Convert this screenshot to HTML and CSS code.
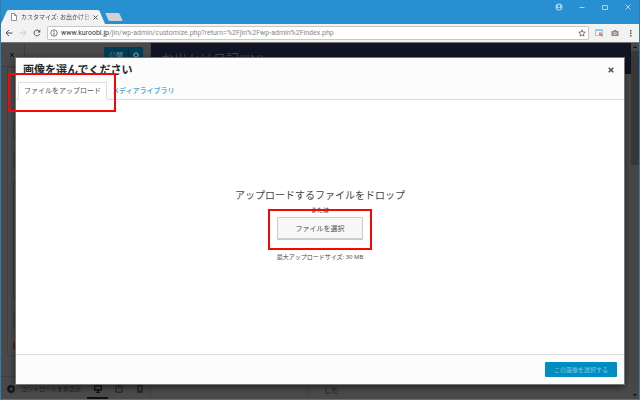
FILE: index.html
```html
<!DOCTYPE html>
<html lang="ja">
<head>
    <meta charset="UTF-8">
    <meta name="viewport" content="width=device-width, initial-scale=1.0">
    <title>カスタマイズ: お出かけ日記</title>
    <link rel="stylesheet" href="styles.css">
</head>
<body>
    <!-- Title bar -->
    <header class="titlebar">
        <div class="tab">
            <svg class="tab-shape" viewBox="0 0 106 14" preserveAspectRatio="none"><path d="M0 14 L6 1 Q6.500 0 8 0 H97 Q99 0 99.500 1 L105 14 Z" fill="#f2f2f2"/></svg>
            <svg class="file-icon" viewBox="0 0 6 8"><path d="M.5.5h3l2 2v5h-5zM3.500.5v2h2" fill="#fff" stroke="#777" stroke-width=".8"/></svg>
            <span class="tab-title">カスタマイズ: お出かけ日記(</span>
            <button class="tab-close" aria-label="閉じる"><svg viewBox="0 0 5 5"><path d="M.5.5l4 4M4.500.5l-4 4" stroke="#555"/></svg></button>
        </div>
        <button class="new-tab" aria-label="新しいタブ"></button>
        <div class="window-controls">
            <button aria-label="ユーザー"><svg viewBox="0 0 8 8"><circle cx="4" cy="4" r="3.500" fill="#a9d3ee"/><circle cx="4" cy="3" r="1.200" fill="#2890d0"/><path d="M1.800 5.600q2.200-1.600 4.400 0q-2.200 2-4.400 0" fill="#2890d0"/></svg></button>
            <button aria-label="最小化"><svg viewBox="0 0 8 8"><path d="M1.500 4.500h5" stroke="#a9d3ee"/></svg></button>
            <button aria-label="最大化"><svg viewBox="0 0 8 8"><path d="M1.500 2.500h5v4h-5z" fill="none" stroke="#a9d3ee"/></svg></button>
            <button aria-label="ウィンドウを閉じる"><svg viewBox="0 0 8 8"><path d="M1.500 1.500l5 5M6.500 1.500l-5 5" stroke="#a9d3ee"/></svg></button>
        </div>
    </header>

    <!-- Address bar -->
    <nav class="toolbar">
        <button aria-label="戻る"><svg viewBox="0 0 8 8"><path d="M7.500 4H1M4 1L1 4l3 3" fill="none" stroke="#555"/></svg></button>
        <button aria-label="進む"><svg viewBox="0 0 8 8"><path d="M.5 4H7M4 1l3 3-3 3" fill="none" stroke="#ccc"/></svg></button>
        <button aria-label="再読み込み"><svg viewBox="0 0 8 8"><path d="M6.600 5.200A2.900 2.900 0 1 1 6.200 2" fill="none" stroke="#555"/><path d="M7.300.6v3h-3z" fill="#555"/></svg></button>
        <div class="address">
            <svg viewBox="0 0 8 8"><circle cx="4" cy="4" r="3.200" fill="none" stroke="#555" stroke-width=".8"/><path d="M4 3.500v2.500M4 2v.9" stroke="#555" stroke-width=".9"/></svg>
            <span class="url"><b>www.kuroobi.jp</b>/jin/wp-admin/customize.php?return=%2Fjin%2Fwp-admin%2Findex.php</span>
            <svg viewBox="0 0 8 8"><path d="M4 .8l.9 2.200 2.400.2-1.800 1.600.5 2.300L4 5.900 2 7.100l.5-2.300L.7 3.200l2.400-.2z" fill="none" stroke="#555" stroke-width=".8"/></svg>
        </div>
        <button class="ext" aria-label="キャプチャ"><svg viewBox="0 0 8 8"><path d="M.5.5h7v6h-7z" fill="#eaf6fd" stroke="#8ccbed"/><path d="M0 1.500h8" stroke="#8ccbed"/><path d="M4 3.500h3L6.200 4.400 8 6.500l-1.200 1.200-1.800-2-1 .8z" fill="#e87561"/></svg></button>
        <button class="ext" aria-label="カメラ"><svg viewBox="0 0 8 8"><path d="M.5 2h2l.7-1h1.800l.7 1h1.800v5h-7z" fill="#888"/><circle cx="4" cy="4.400" r="1.700" fill="#ddd"/><path d="M4 3.400v2M3 4.400h2" stroke="#888" stroke-width=".7"/></svg></button>
        <button class="ext" aria-label="メニュー"><svg viewBox="0 0 8 8"><path d="M3 1h1.500v1.500H3zM3 3.500h1.500V5H3zM3 6h1.500v1.500H3z" fill="#555"/></svg></button>
    </nav>

    <main class="viewport">
        <!-- Customizer, dimmed under the dialog -->
        <aside class="sidebar">
            <div class="sidebar-head">
                <button class="leave" aria-label="閉じる"><svg viewBox="0 0 6 6"><path d="M1 1l4 4M5 1L1 5" stroke="#111"/></svg></button>
                <div class="publish">
                    <button>公開</button>
                    <button aria-label="公開設定"><svg viewBox="0 0 8 8"><circle cx="4" cy="4" r="1.900" fill="none" stroke="#6c8b98" stroke-width="1.300"/><path d="M4 .8v1M4 6.200v1M.8 4h1M6.200 4h1M1.700 1.700l.8.8M5.500 5.500l.8.8M6.300 1.700l-.8.8M2.500 5.500l-.8.8" stroke="#6c8b98"/></svg></button>
                </div>
            </div>
            <div class="panel">
                <div class="field"></div>
                <div class="field"></div>
                <div class="field tall"></div>
                <div class="field"></div>
                <div class="swatch"></div>
            </div>
            <div class="sidebar-foot">
                <button class="collapse">
                    <svg viewBox="0 0 8 8"><circle cx="4" cy="4" r="3.900" fill="#171717"/><path d="M5.200 2v4L2.400 4z" fill="#555"/></svg>
                    <span>コントロールを非表示</span>
                </button>
                <button class="device active" aria-label="デスクトップ"><svg viewBox="0 0 8 8"><path d="M.7.8h6.600v4.200H.7z" fill="none" stroke="#111" stroke-width="1.300"/><path d="M4 5v2M2 7.300h4" stroke="#111" stroke-width="1.200"/></svg></button>
                <button class="device" aria-label="タブレット"><svg viewBox="0 0 8 8"><path d="M1 .8h6v6.400H1z" fill="none" stroke="#202020" stroke-width="1"/><path d="M3 2h2L3 4z" fill="#202020"/></svg></button>
                <button class="device" aria-label="モバイル"><svg viewBox="0 0 8 8"><path d="M2 .8h4v6.400H2z" fill="none" stroke="#202020" stroke-width="1.200"/><path d="M2 6h4" stroke="#202020"/></svg></button>
            </div>
        </aside>
        <section class="preview">
            <div class="site-title">お出かけ日記(JIN)</div>
            <div class="site-body"><p>した</p></div>
        </section>
        <div class="scrollbar">
            <svg viewBox="0 0 8 8"><path d="M2 5h4L4 3z" fill="#111"/></svg>
            <div class="thumb"></div>
            <svg viewBox="0 0 8 8"><path d="M2 3h4L4 5z" fill="#111"/></svg>
        </div>

        <!-- Media dialog -->
        <div class="modal" role="dialog" aria-labelledby="modal-title">
            <div class="modal-head">
                <h1 id="modal-title">画像を選んでください</h1>
                <button class="modal-close" aria-label="閉じる"><svg viewBox="0 0 6 6"><path d="M.7.7l4.600 4.600M5.300.7L.7 5.300" stroke="#555" stroke-width="1.600"/></svg></button>
            </div>
            <div class="modal-tabs">
                <a href="#upload" class="current">ファイルをアップロード</a>
                <a href="#library">メディアライブラリ</a>
                <span class="mark mark-tab"></span>
            </div>
            <div class="uploader" id="upload">
                <h2>アップロードするファイルをドロップ</h2>
                <p class="or">または</p>
                <div class="select">
                    <button>ファイルを選択</button>
                    <span class="mark mark-select"></span>
                </div>
                <p class="limit">最大アップロードサイズ: 30 MB</p>
            </div>
            <div class="modal-foot">
                <button class="choose">この画像を選択する</button>
            </div>
        </div>
    </main>
</body>
</html>
```
FILE: styles.css
```css
* {
    box-sizing: border-box;
}

body {
    display: flex;
    flex-direction: column;
    height: 100vh;
    margin: 0;
    border: 1px solid #2f7fae;
    border-top: none;
    font-family: "Open Sans", "Noto Sans CJK JP", sans-serif;
    font-size: 7px;
    overflow: hidden;
}

h1, h2, p {
    margin: 0;
    font-weight: normal;
}

button {
    padding: 0;
    border: none;
    background: none;
    font: inherit;
    color: inherit;
    cursor: pointer;
}

svg {
    display: block;
    flex: none;
    width: 8px;
    height: 8px;
}

/* Title bar */
.titlebar {
    display: flex;
    align-items: flex-end;
    height: 24px;
    flex: none;
    background: #2890d0;
}

.tab {
    position: relative;
    display: flex;
    align-items: center;
    width: 105px;
    height: 14px;
    padding: 0 8px 0 10px;
}

.tab-shape {
    position: absolute;
    inset: 0;
    width: 100%;
    height: 100%;
}

.tab > :not(.tab-shape) {
    position: relative;
}

.tab .file-icon {
    width: 6px;
}

.tab-title {
    flex: 1;
    min-width: 0;
    margin: 0 1px 0 4px;
    overflow: hidden;
    white-space: nowrap;
    font-size: 6px;
    line-height: 12px;
    color: #444;
    mask-image: linear-gradient(to right, #000 85%, transparent);
}

.tab-close svg {
    width: 5px;
    height: 5px;
}

.new-tab {
    width: 14px;
    height: 8px;
    margin: 0 0 3px 1px;
    background: #cfd1d3;
    border-radius: 1px;
    transform: skewX(25deg);
}

.window-controls {
    display: flex;
    gap: 15px;
    align-self: flex-start;
    margin-left: auto;
    padding: 3px 7px;
}

/* Address bar */
.toolbar {
    display: flex;
    align-items: center;
    gap: 6px;
    height: 19px;
    flex: none;
    padding: 0 4px;
    background: #f2f2f2;
    border-bottom: 1px solid #777;
}

.address {
    display: flex;
    align-items: center;
    flex: 1;
    gap: 3px;
    height: 14px;
    padding: 0 2px;
    background: #fff;
    border: 1px solid #c8c8c8;
    border-radius: 1px;
}

.url {
    flex: 1;
    white-space: nowrap;
    font-family: Roboto, sans-serif;
    line-height: 12px;
    color: #888;
}

.url b {
    font-weight: normal;
    color: #333;
}

.ext {
    margin-right: 2px;
}

.ext:last-child {
    margin: 0;
}

/* Customizer */
.viewport {
    position: relative;
    display: flex;
    flex: 1;
    min-height: 0;
    background: #4a4a4a;
}

.sidebar {
    display: flex;
    flex-direction: column;
    width: 150px;
    border-right: 1px solid #424242;
}

.sidebar-head {
    display: flex;
    align-items: flex-start;
    justify-content: space-between;
    height: 24px;
    padding-right: 7px;
    border-bottom: 1px solid #404040;
}

.leave {
    width: 24px;
    height: 24px;
    padding-left: 8px;
    border-right: 1px solid #404040;
}

.leave svg {
    width: 6px;
    height: 6px;
}

.publish {
    display: flex;
    height: 15px;
    margin-top: 4px;
    background: #003e57;
    border-radius: 1px;
    color: #6c8b98;
}

.publish button {
    padding: 0 3px;
}

.publish button:first-child {
    padding: 0 5px;
    border-right: 1px solid #002c3e;
}

.panel {
    display: flex;
    flex-direction: column;
    gap: 14px;
    flex: 1;
    margin: 0 6px 20px;
    padding: 54px 5px 6px;
    border: 1px solid #414141;
    background: #4c4c4c;
}

.field {
    height: 16px;
    border: 1px solid #3c3c3c;
}

.field.tall {
    flex: 1;
}

.swatch {
    height: 7px;
    background: #5b2023;
}

.sidebar-foot {
    display: flex;
    align-items: stretch;
    height: 23px;
    flex: none;
    padding: 0 0 0 6px;
    border-top: 1px solid #404040;
}

.collapse {
    display: flex;
    align-items: center;
    gap: 6px;
    width: 80px;
    padding-top: 2px;
    white-space: nowrap;
    font-size: 6px;
    color: #1c1c1c;
}

.collapse span {
    line-height: 12px;
}

.device {
    display: flex;
    align-items: center;
    justify-content: center;
    width: 21px;
    padding-top: 3px;
    border-bottom: 2px solid transparent;
}

.device.active {
    border-color: #111;
}

/* Site preview */
.preview {
    display: flex;
    flex-direction: column;
    flex: 1;
}

.site-title {
    height: 31px;
    padding: 6px 10px;
    background: #121525;
    font-size: 13px;
    line-height: 20px;
    color: #4a4a4c;
}

.site-body {
    display: flex;
    align-items: flex-end;
    flex: 1;
    margin-left: 157px;
    padding: 0 15px 2px;
    border-left: 1px solid #444;
    color: #191919;
}

.site-body p {
    line-height: 12px;
}

.scrollbar {
    display: flex;
    flex-direction: column;
    width: 8px;
    background: #474747;
}

.thumb {
    height: 114px;
    margin-bottom: auto;
    background: #383838;
}

/* Media dialog */
.modal {
    position: absolute;
    inset: 15px;
    display: flex;
    flex-direction: column;
    background: #fff;
    box-shadow: 0 0 0 1px #777, 0 2px 8px rgba(0, 0, 0, 0.7);
}

.modal-head {
    display: flex;
    align-items: center;
    justify-content: space-between;
    height: 24px;
    padding: 0 10px 0 7px;
    background: #fcfcfc;
}

h1 {
    font-size: 11px;
    font-weight: bold;
    line-height: 16px;
    color: #23282d;
}

.modal-close svg {
    width: 6px;
    height: 6px;
}

.modal-tabs {
    position: relative;
    display: flex;
    height: 18px;
    padding-left: 2px;
    background: #fcfcfc;
    border-bottom: 1px solid #ddd;
}

.modal-tabs a {
    height: 18px;
    padding: 0 4px;
    line-height: 16px;
    border: 1px solid transparent;
    color: #0085ba;
    text-decoration: none;
    white-space: nowrap;
}

.modal-tabs a.current {
    padding: 0 5px;
    border-color: #ddd;
    border-bottom-color: #fff;
    background: #fff;
    color: #555;
}

/* Red marker frames */
.mark {
    position: absolute;
    border: 2px solid #f60606;
    pointer-events: none;
}

.mark-tab {
    top: -9px;
    left: -8px;
    width: 108px;
    height: 39px;
}

.mark-select {
    inset: -8px -9px -10px;
}

.uploader {
    display: flex;
    flex-direction: column;
    align-items: center;
    justify-content: center;
    flex: 1;
    padding-bottom: 4px;
    color: #444;
}

h2 {
    font-size: 10px;
    line-height: 16px;
}

.or {
    font-size: 6px;
    line-height: 14px;
}

.select {
    position: relative;
}

.select button {
    display: block;
    width: 86px;
    height: 23px;
    background: #f7f7f7;
    border: 1px solid #ccc;
    border-bottom-width: 2px;
    border-radius: 1px;
    color: #555;
}

.limit {
    margin-top: 10px;
    font-size: 6px;
    line-height: 14px;
}

.modal-foot {
    display: flex;
    align-items: center;
    justify-content: flex-end;
    height: 30px;
    padding-right: 7px;
    background: #fcfcfc;
    border-top: 1px solid #ddd;
}

.choose {
    height: 15px;
    width: 72px;
    background: #008ec2;
    border-radius: 1px;
    font-size: 6px;
    color: #7cc8e3;
}
```
